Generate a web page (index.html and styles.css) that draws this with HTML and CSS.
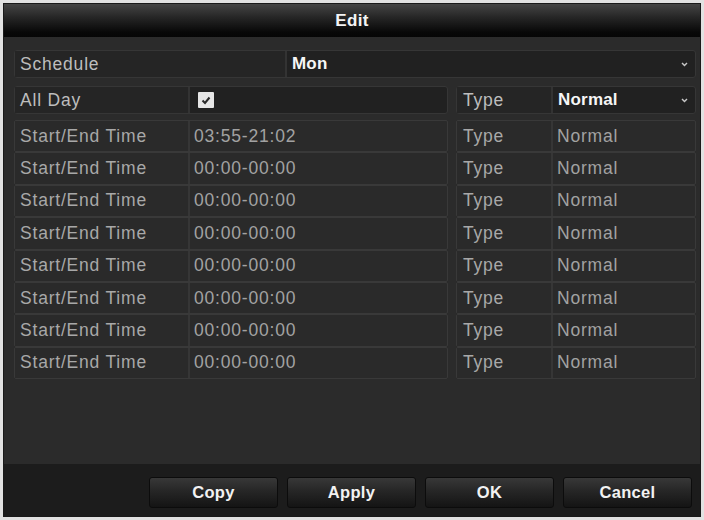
FILE: index.html
```html
<!DOCTYPE html>
<html>
<head>
<meta charset="utf-8">
<link rel="stylesheet" href="styles.css">
</head>
<body>
<div class="dialog">
  <div class="titlebar">Edit</div>
  <div class="content">
    <div class="box schedule">
      <div class="cell label sched-label">Schedule</div>
      <div class="cell value strong">Mon<svg class="chev" width="7" height="5" viewBox="0 0 7 5"><polyline points="1,1 3.5,3.6 6,1" fill="none" stroke="#c8c8c8" stroke-width="1.4"/></svg></div>
    </div>
    <div class="row allday">
      <div class="box left">
        <div class="cell label">All Day</div>
        <div class="cell value"><span class="check"><svg width="16" height="16" viewBox="0 0 16 16"><path d="M4.5 8.5 L7 11 L11.5 5.5" fill="none" stroke="#2a2a2a" stroke-width="2"/></svg></span></div>
      </div>
      <div class="box right">
        <div class="cell label">Type</div>
        <div class="cell value strong">Normal<svg class="chev" width="7" height="5" viewBox="0 0 7 5"><polyline points="1,1 3.5,3.6 6,1" fill="none" stroke="#c8c8c8" stroke-width="1.4"/></svg></div>
      </div>
    </div>
    <div class="times">
      <div class="row time">
        <div class="box left"><div class="cell label">Start/End Time</div><div class="cell value">03:55-21:02</div></div>
        <div class="box right"><div class="cell label">Type</div><div class="cell value">Normal</div></div>
      </div>
      <div class="row time">
        <div class="box left"><div class="cell label">Start/End Time</div><div class="cell value">00:00-00:00</div></div>
        <div class="box right"><div class="cell label">Type</div><div class="cell value">Normal</div></div>
      </div>
      <div class="row time">
        <div class="box left"><div class="cell label">Start/End Time</div><div class="cell value">00:00-00:00</div></div>
        <div class="box right"><div class="cell label">Type</div><div class="cell value">Normal</div></div>
      </div>
      <div class="row time">
        <div class="box left"><div class="cell label">Start/End Time</div><div class="cell value">00:00-00:00</div></div>
        <div class="box right"><div class="cell label">Type</div><div class="cell value">Normal</div></div>
      </div>
      <div class="row time">
        <div class="box left"><div class="cell label">Start/End Time</div><div class="cell value">00:00-00:00</div></div>
        <div class="box right"><div class="cell label">Type</div><div class="cell value">Normal</div></div>
      </div>
      <div class="row time">
        <div class="box left"><div class="cell label">Start/End Time</div><div class="cell value">00:00-00:00</div></div>
        <div class="box right"><div class="cell label">Type</div><div class="cell value">Normal</div></div>
      </div>
      <div class="row time">
        <div class="box left"><div class="cell label">Start/End Time</div><div class="cell value">00:00-00:00</div></div>
        <div class="box right"><div class="cell label">Type</div><div class="cell value">Normal</div></div>
      </div>
      <div class="row time">
        <div class="box left"><div class="cell label">Start/End Time</div><div class="cell value">00:00-00:00</div></div>
        <div class="box right"><div class="cell label">Type</div><div class="cell value">Normal</div></div>
      </div>
    </div>
  </div>
  <div class="footer">
    <div class="btn">Copy</div>
    <div class="btn">Apply</div>
    <div class="btn">OK</div>
    <div class="btn">Cancel</div>
  </div>
</div>
</body>
</html>
```
FILE: styles.css
```css
html, body {
  margin: 0;
  padding: 0;
}
body {
  background: #e2e2e2;
  width: 704px;
  height: 520px;
  overflow: hidden;
  font-family: "Liberation Sans", Arial, sans-serif;
}
.dialog {
  margin: 4px;
  width: 696px;
  height: 512px;
  background: #2b2b2b;
  display: flex;
  flex-direction: column;
  box-shadow: 0 0 0 1px #1a1a1a;
}
.titlebar {
  height: 33px;
  flex: none;
  background: linear-gradient(#454545 0%, #262626 40%, #080808 85%, #050505 100%);
  color: #f4f4f4;
  font-weight: bold;
  font-size: 17px;
  letter-spacing: 0.3px;
  display: flex;
  align-items: center;
  justify-content: center;
  padding-top: 1px;
  box-sizing: border-box;
}
.content {
  flex: 1;
  padding: 13px 0 0 10px;
  display: flex;
  flex-direction: column;
}
.box {
  display: flex;
  border: 1px solid #363636;
  border-radius: 3px;
  box-sizing: border-box;
  background: #212121;
}
.cell {
  display: flex;
  align-items: center;
  box-sizing: border-box;
  font-size: 17.5px;
  letter-spacing: 0.8px;
  white-space: nowrap;
}
.label {
  color: #bdbdbd;
  padding-left: 5px;
  border-right: 2px solid #333;
  background: #252525;
}
.value {
  flex: 1;
  color: #d8d8d8;
  padding-left: 4px;
}
.strong {
  font-weight: bold;
  font-size: 17px;
  letter-spacing: 0.2px;
  color: #f6f6f6;
  padding-left: 5px;
}
.chev {
  margin-left: auto;
  margin-right: 7px;
}
.schedule {
  width: 682px;
  height: 28px;
}
.sched-label {
  width: 272px;
}
.row {
  display: flex;
  gap: 8px;
}
.left {
  width: 434px;
}
.left .label {
  width: 175px;
}
.right {
  width: 240px;
}
.right .label {
  width: 96px;
  padding-left: 6px;
}
.allday {
  margin-top: 8px;
  height: 28px;
}
.check {
  width: 16px;
  height: 16px;
  background: #e6e6e6;
  border-radius: 1px;
  margin-left: 4px;
  display: flex;
}
.times {
  margin-top: 6px;
  display: flex;
  flex-direction: column;
}
.time {
  height: 32.4px;
}
.time .box {
  background: #2a2a2a;
  border-color: #393939;
  border-radius: 2px;
}
.time .label {
  background: #2a2a2a;
  color: #a8a8a8;
  border-right-color: #363636;
}
.time .value {
  color: #a2a2a2;
}
.footer {
  height: 52px;
  flex: none;
  background: #1c1c1c;
  display: flex;
  justify-content: flex-end;
  gap: 9px;
  padding: 13px 8px 0 0;
  box-sizing: border-box;
}
.btn {
  width: 129px;
  height: 31px;
  box-sizing: border-box;
  border: 1px solid #0c0c0c;
  border-radius: 3px;
  background: linear-gradient(#383838 0%, #262626 45%, #141414 100%);
  color: #f2f2f2;
  font-weight: bold;
  font-size: 16.5px;
  letter-spacing: 0.3px;
  display: flex;
  align-items: center;
  justify-content: center;
}
```
